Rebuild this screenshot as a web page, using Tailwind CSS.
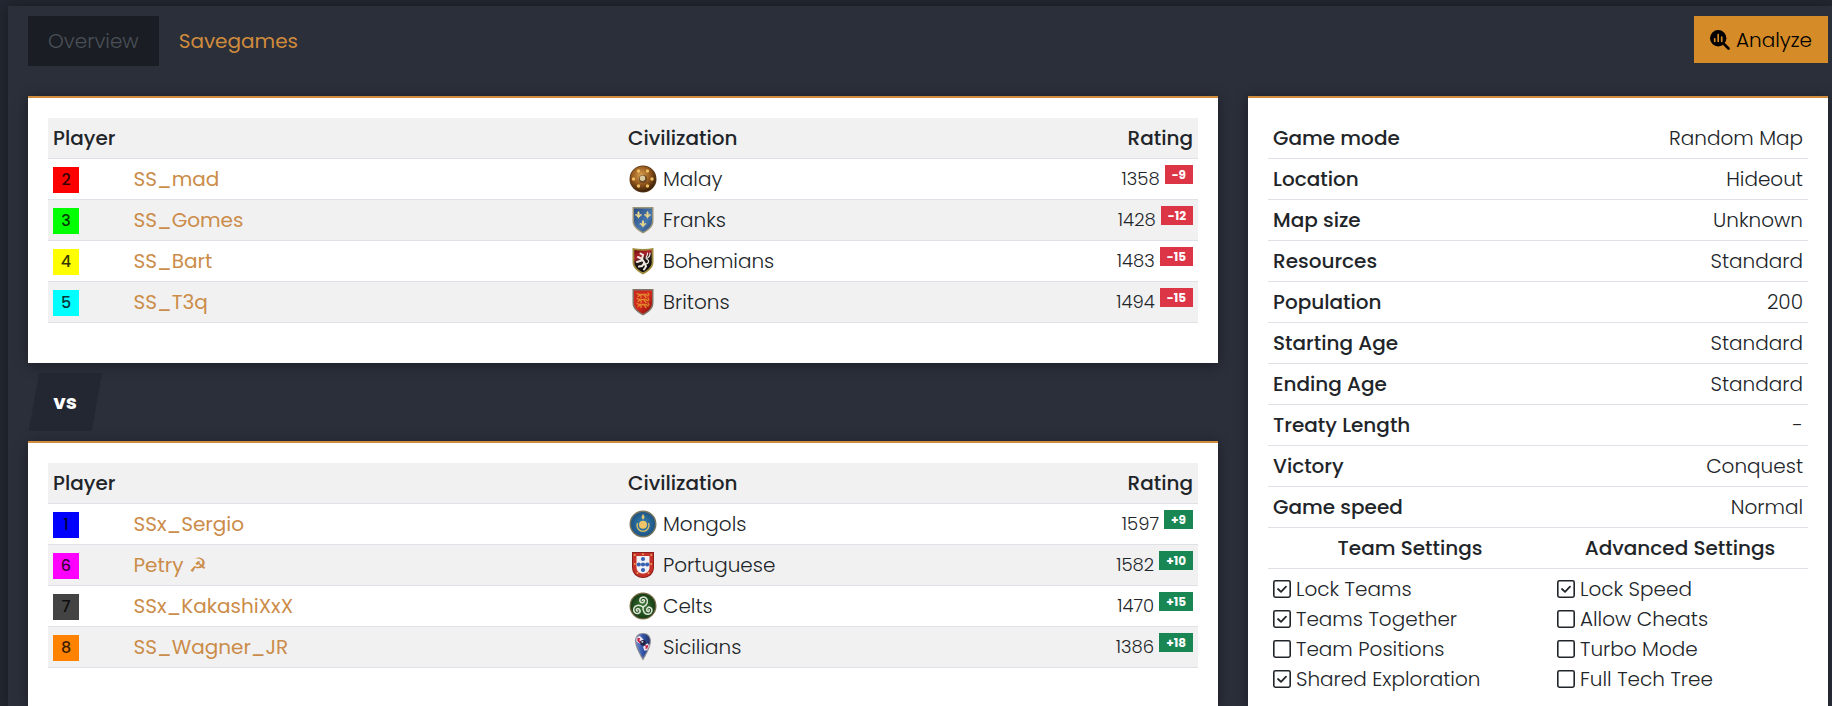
<!DOCTYPE html>
<html lang="en">
<head>
<meta charset="utf-8">
<meta name="viewport" content="width=device-width, initial-scale=1">
<title>Match overview</title>
<script src="https://cdn.jsdelivr.net/npm/@tailwindcss/browser@4"></script>
</head>
<body class="overflow-x-hidden bg-[#232731] pt-[6px] pl-2 font-[Poppins,Inter,sans-serif] text-[20px] leading-[30px] font-light text-[#212529]">
<svg class="absolute size-0" aria-hidden="true">
  <defs>
    <radialGradient id="gold" cx=".42" cy=".35" r=".65"><stop offset="0" stop-color="#d9a050"/><stop offset=".55" stop-color="#94581c"/><stop offset="1" stop-color="#3c2008"/></radialGradient>
    <linearGradient id="blue" x2="1" y2="1"><stop offset="0" stop-color="#2b4c83"/><stop offset=".6" stop-color="#4676ae"/><stop offset="1" stop-color="#294a7c"/></linearGradient>
    <linearGradient id="red" x2="1" y2="1"><stop offset="0" stop-color="#c82a22"/><stop offset=".5" stop-color="#d3271c"/><stop offset="1" stop-color="#820f0c"/></linearGradient>
    <linearGradient id="boh" x2=".4" y2="1"><stop offset="0" stop-color="#6c1010"/><stop offset=".35" stop-color="#b4222c"/><stop offset=".55" stop-color="#241a1a"/><stop offset="1" stop-color="#0b0b0b"/></linearGradient>
    <radialGradient id="mong"><stop offset="0" stop-color="#3584b4"/><stop offset="1" stop-color="#1d5585"/></radialGradient>
    <radialGradient id="green"><stop offset="0" stop-color="#3d7a35"/><stop offset="1" stop-color="#173d15"/></radialGradient>
    <linearGradient id="sic" x2="1"><stop offset="0" stop-color="#6d8ad0"/><stop offset=".5" stop-color="#3154a8"/><stop offset="1" stop-color="#1f2f63"/></linearGradient>
    <path id="lis" d="M0-4C1.500-2.500 1.200-1 .8.200C2-1.800 3.800-1.200 3.300.800C2.800.200 1.800.600 1.200 1.300H1.800V2H.8L0 4L-.8 2H-1.800V1.300H-1.200C-1.800.600-2.800.200-3.300.800C-3.800-1.200-2-1.800-.8.200C-1.200-1-1.500-2.500 0-4Z"/>
  </defs>
  <symbol id="malay" viewBox="0 0 28 28">
    <circle cx="14" cy="14" r="13.500" fill="#5a3a1a"/><circle cx="14" cy="14" r="12.800" fill="url(#gold)"/>
    <g fill="#f0bd62"><circle cx="9.500" cy="6" r="1.700"/><circle cx="18.500" cy="6" r="1.700"/><circle cx="4.500" cy="14" r="1.700"/><circle cx="23" cy="14" r="1.700"/><circle cx="9.500" cy="21" r="1.700"/><circle cx="18.500" cy="21" r="1.700"/></g>
    <circle cx="14" cy="14" r="4" fill="#6b4a25"/><circle cx="13.500" cy="13.300" r="2.700" fill="#dccba0"/>
  </symbol>
  <symbol id="franks" viewBox="0 0 28 28">
    <path d="M3.500 1H24.500V15C24.500 21 19 25 14 27.500C9 25 3.500 21 3.500 15Z" fill="#9c9478"/><path d="M5 2.500H23V15C23 20 18.500 23.500 14 25.800C9.500 23.500 5 20 5 15Z" fill="url(#blue)"/>
    <g fill="#e7d58c"><use href="#lis" x="9.500" y="9"/><use href="#lis" x="18.500" y="9"/><use href="#lis" x="14" y="18"/></g>
  </symbol>
  <symbol id="bohemians" viewBox="0 0 28 28">
    <path d="M3.500 1Q14 3 24.500 1V15C24.500 21 19 25 14 27.500C9 25 3.500 21 3.500 15Z" fill="#a08c3e"/><path d="M5.300 3Q14 4.600 22.700 3V15C22.700 20 18.500 23 14 25.300C9.500 23 5.300 20 5.300 15Z" fill="url(#boh)"/>
    <g fill="none" stroke="#efe9e2" stroke-linecap="round"><path d="M11.500 6.500L14 8L13 12L15.500 16L13 19L10 19.500M13 12L9 10M12.500 13.500L8 15M15.500 16L17 19.500L15 22.500" stroke-width="2"/><path d="M16 17C21 17 20 12 17.500 12C16 10 19 9 18.500 6M18.500 11C21 10 21 7.500 21 6" stroke-width="1.200"/></g>
  </symbol>
  <symbol id="britons" viewBox="0 0 28 28">
    <path d="M3.500 1H24.500V15C24.500 21 19 25 14 27.500C9 25 3.500 21 3.500 15Z" fill="#817568"/><path d="M5 2.500H23V15C23 20 18.500 23.500 14 25.800C9.500 23.500 5 20 5 15Z" fill="url(#red)"/>
    <g id="lion" fill="none" stroke="#e2882c" stroke-width="1.300" stroke-linecap="round"><path d="M8 5.500L10 6.500H17L19 8M9 8.500L11 7M15 7L17 9.500M19 5L20 7M12 7V9.500"/></g><use href="#lion" y="5"/><use href="#lion" y="10"/>
  </symbol>
  <symbol id="mongols" viewBox="0 0 28 28">
    <circle cx="14" cy="14" r="13.500" fill="#77745f"/><circle cx="14" cy="14" r="12" fill="url(#mong)"/>
    <circle cx="14" cy="14.800" r="4" fill="#f0c469"/><path d="M8.500 13A6 6 0 1 0 19.500 13" fill="none" stroke="#d9bc68" stroke-width="1.400"/><path d="M14 4C16.500 7 15.500 8.500 14 9.500C12.500 8.500 12 7 14 4Z" fill="#dfc170"/>
  </symbol>
  <symbol id="portuguese" viewBox="0 0 28 28">
    <path d="M3 1H25V16C25 23 20 27 14 27C8 27 3 23 3 16Z" fill="#8c201c"/><path d="M4 2H24V16C24 22 19.500 26 14 26C8.500 26 4 22 4 16Z" fill="#c72f29"/>
    <path d="M7.500 5H20.500V16C20.500 20 18 22.500 14 22.500C10 22.500 7.500 20 7.500 16Z" fill="#f2f2f4"/>
    <g fill="#3762b3"><circle cx="14" cy="8" r="2.100"/><circle cx="14" cy="13.500" r="2.100"/><circle cx="9.800" cy="13.500" r="2.100"/><circle cx="18.200" cy="13.500" r="2.100"/><circle cx="14" cy="19" r="2.100"/></g>
    <g fill="#e3a75c"><circle cx="5.700" cy="4" r="1"/><circle cx="14" cy="3.300" r="1"/><circle cx="22.300" cy="4" r="1"/><circle cx="5.800" cy="13" r="1"/><circle cx="22.200" cy="13" r="1"/><circle cx="8.500" cy="22" r="1"/><circle cx="19.500" cy="22" r="1"/></g>
  </symbol>
  <symbol id="celts" viewBox="0 0 28 28">
    <circle cx="14" cy="14" r="13.500" fill="#776b45"/><circle cx="14" cy="14" r="12.200" fill="url(#green)"/>
    <g id="arm" fill="none" stroke="#dfe8d8" stroke-width="1.500" stroke-linecap="round"><path d="M14 15C18.500 13 19.500 9 17.500 6.500C15.500 4 10.800 5 10.800 8.300C10.800 11.500 15.500 11.500 15.500 8.700C15.500 7.500 13.500 7.200 13.300 8.500"/></g><use href="#arm" transform="rotate(120 14 15)"/><use href="#arm" transform="rotate(240 14 15)"/>
  </symbol>
  <symbol id="sicilians" viewBox="0 0 28 30">
    <path d="M14 0C19 0 22.800 3.500 22.500 9C22 16 17 24 14 29.500C11 24 6 16 5.500 9C5.200 3.500 9 0 14 0Z" fill="#858795"/><path d="M14 1.200C18.500 1.200 21.500 4.500 21.200 9C20.800 15 17 21 14 26.500C11 21 7.200 15 6.800 9C6.500 4.500 9.500 1.200 14 1.200Z" fill="url(#sic)"/>
    <path d="M7 5L10.500 3L14.500 7L11 11.500L7 9.500ZM14 15L18.500 11L21 13L18.500 18.500L15.500 19Z" fill="#eee5ec"/><path d="M8 5L11 5.500L10 8L13 9L10.500 11L8 8.500ZM15.500 13L18 13.500L20 12.500L18.500 17L16.500 17L17 15Z" fill="#c42148"/><circle cx="14" cy="10.500" r="3" fill="#26213c"/><circle cx="13.300" cy="9.500" r="1.100" fill="#bdc7e4"/>
  </symbol>
  <symbol id="box" viewBox="0 0 18 18"><rect x=".8" y=".8" width="16.400" height="16.400" rx="1.600" fill="none" stroke="currentColor" stroke-width="1.600"/></symbol>
  <symbol id="tick" viewBox="0 0 18 18"><path d="M5 9L8 11.800L13 6.700" fill="none" stroke="currentColor" stroke-width="1.800" stroke-linecap="round" stroke-linejoin="round"/></symbol>
</svg>

<div class="flex min-h-[calc(100vh-6px)] flex-col bg-[#2b2f3a] pr-1 pl-5 shadow-[0_0_12px_rgba(0,0,0,0.3)]">
  <header class="flex items-start justify-between pt-[10px] pb-[30px]">
    <nav class="flex">
      <a href="#overview" aria-current="page" class="bg-[#1a1d23] px-5 py-[10px] text-[#495057]">Overview</a>
      <a href="#savegames" class="px-5 py-[10px] font-normal text-[#d08b3c]">Savegames</a>
    </nav>
    <button type="button" class="flex h-[47px] items-center gap-[6px] bg-[#d58b27] px-4 text-black">
      <svg class="size-5" viewBox="0 0 20 20" aria-hidden="true"><circle cx="8.200" cy="8.200" r="8.200"/><path d="M12 12L18.500 18.500" stroke="black" stroke-width="2.600" stroke-linecap="round"/><path d="M4.700 8.800V11.300M8.200 4.500V11.300M11.700 7.200V11.300" stroke="#d58b27" stroke-width="1.700" stroke-linecap="round"/></svg>
      Analyze
    </button>
  </header>

  <main class="grid flex-1 grid-cols-[119fr_58fr] gap-x-[30px]">
    <div class="flex flex-col">
      <section class="border-t-2 border-[#d08b3c] bg-white px-5 pt-5 pb-10 shadow-[0_2px_12px_rgba(0,0,0,0.4)]">
        <table class="w-full table-fixed border-separate border-spacing-0 [&_td]:h-[41px] [&_td]:border-b [&_td]:border-[#dee2e6] [&_td]:px-[5px] [&_td]:py-0 [&_th]:h-[41px] [&_th]:border-b [&_th]:border-[#dee2e6] [&_th]:px-[5px] [&_th]:py-0 [&_th]:font-medium">
          <colgroup><col class="w-[7%]"><col class="w-[43%]"><col class="w-[25%]"><col class="w-[25%]"></colgroup>
          <thead><tr class="bg-[#f1f1f1]"><th colspan="2" class="text-left">Player</th><th class="text-left">Civilization</th><th class="text-right">Rating</th></tr></thead>
          <tbody>
            <tr><td><span class="mt-[2px] flex size-[26px] items-center justify-center bg-[#ff0000] text-[16px] font-medium text-black/80">2</span></td><td><a href="#p2" class="font-normal text-[#cb8c49]">SS_mad</a></td><td><span class="flex items-center gap-[6px] pl-px"><svg class="size-7" aria-hidden="true"><use href="#malay"/></svg>Malay</span></td><td><span class="flex items-center justify-end gap-[5px] text-[18px]">1358<span class="mb-[9px] bg-[#dc3545] px-[7px] text-[12px] leading-[19px] font-bold text-white">-9</span></span></td></tr>
            <tr class="bg-[#f1f1f1]"><td><span class="mt-[2px] flex size-[26px] items-center justify-center bg-[#00ff00] text-[16px] font-medium text-black/80">3</span></td><td><a href="#p3" class="font-normal text-[#cb8c49]">SS_Gomes</a></td><td><span class="flex items-center gap-[6px] pl-px"><svg class="size-7" aria-hidden="true"><use href="#franks"/></svg>Franks</span></td><td><span class="flex items-center justify-end gap-[5px] text-[18px]">1428<span class="mb-[9px] bg-[#dc3545] px-[7px] text-[12px] leading-[19px] font-bold text-white">-12</span></span></td></tr>
            <tr><td><span class="mt-[2px] flex size-[26px] items-center justify-center bg-[#ffff00] text-[16px] font-medium text-black/80">4</span></td><td><a href="#p4" class="font-normal text-[#cb8c49]">SS_Bart</a></td><td><span class="flex items-center gap-[6px] pl-px"><svg class="size-7" aria-hidden="true"><use href="#bohemians"/></svg>Bohemians</span></td><td><span class="flex items-center justify-end gap-[5px] text-[18px]">1483<span class="mb-[9px] bg-[#dc3545] px-[7px] text-[12px] leading-[19px] font-bold text-white">-15</span></span></td></tr>
            <tr class="bg-[#f1f1f1]"><td><span class="mt-[2px] flex size-[26px] items-center justify-center bg-[#00ffff] text-[16px] font-medium text-black/80">5</span></td><td><a href="#p5" class="font-normal text-[#cb8c49]">SS_T3q</a></td><td><span class="flex items-center gap-[6px] pl-px"><svg class="size-7" aria-hidden="true"><use href="#britons"/></svg>Britons</span></td><td><span class="flex items-center justify-end gap-[5px] text-[18px]">1494<span class="mb-[9px] bg-[#dc3545] px-[7px] text-[12px] leading-[19px] font-bold text-white">-15</span></span></td></tr>
          </tbody>
        </table>
      </section>

      <div class="my-[10px] flex h-[58px] w-[74px] items-center justify-center bg-[#232731] text-[20px] font-bold text-white [clip-path:polygon(15%_0,100%_0,86%_100%,1%_100%)]">vs</div>

      <section class="flex-1 border-t-2 border-[#d08b3c] bg-white px-5 pt-5 pb-8 shadow-[0_2px_12px_rgba(0,0,0,0.4)]">
        <table class="w-full table-fixed border-separate border-spacing-0 [&_td]:h-[41px] [&_td]:border-b [&_td]:border-[#dee2e6] [&_td]:px-[5px] [&_td]:py-0 [&_th]:h-[41px] [&_th]:border-b [&_th]:border-[#dee2e6] [&_th]:px-[5px] [&_th]:py-0 [&_th]:font-medium">
          <colgroup><col class="w-[7%]"><col class="w-[43%]"><col class="w-[25%]"><col class="w-[25%]"></colgroup>
          <thead><tr class="bg-[#f1f1f1]"><th colspan="2" class="text-left">Player</th><th class="text-left">Civilization</th><th class="text-right">Rating</th></tr></thead>
          <tbody>
            <tr><td><span class="mt-[2px] flex size-[26px] items-center justify-center bg-[#0000ff] text-[16px] font-medium text-black/80">1</span></td><td><a href="#p1" class="font-normal text-[#cb8c49]">SSx_Sergio</a></td><td><span class="flex items-center gap-[6px] pl-px"><svg class="size-7" aria-hidden="true"><use href="#mongols"/></svg>Mongols</span></td><td><span class="flex items-center justify-end gap-[5px] text-[18px]">1597<span class="mb-[9px] bg-[#198754] px-[7px] text-[12px] leading-[19px] font-bold text-white">+9</span></span></td></tr>
            <tr class="bg-[#f1f1f1]"><td><span class="mt-[2px] flex size-[26px] items-center justify-center bg-[#ff00ff] text-[16px] font-medium text-black/80">6</span></td><td><a href="#p6" class="font-normal text-[#cb8c49]">Petry ☭</a></td><td><span class="flex items-center gap-[6px] pl-px"><svg class="size-7" aria-hidden="true"><use href="#portuguese"/></svg>Portuguese</span></td><td><span class="flex items-center justify-end gap-[5px] text-[18px]">1582<span class="mb-[9px] bg-[#198754] px-[7px] text-[12px] leading-[19px] font-bold text-white">+10</span></span></td></tr>
            <tr><td><span class="mt-[2px] flex size-[26px] items-center justify-center bg-[#434343] text-[16px] font-medium text-black/80">7</span></td><td><a href="#p7" class="font-normal text-[#cb8c49]">SSx_KakashiXxX</a></td><td><span class="flex items-center gap-[6px] pl-px"><svg class="size-7" aria-hidden="true"><use href="#celts"/></svg>Celts</span></td><td><span class="flex items-center justify-end gap-[5px] text-[18px]">1470<span class="mb-[9px] bg-[#198754] px-[7px] text-[12px] leading-[19px] font-bold text-white">+15</span></span></td></tr>
            <tr class="bg-[#f1f1f1]"><td><span class="mt-[2px] flex size-[26px] items-center justify-center bg-[#ff8201] text-[16px] font-medium text-black/80">8</span></td><td><a href="#p8" class="font-normal text-[#cb8c49]">SS_Wagner_JR</a></td><td><span class="flex items-center gap-[6px] pl-px"><svg class="size-7" aria-hidden="true"><use href="#sicilians"/></svg>Sicilians</span></td><td><span class="flex items-center justify-end gap-[5px] text-[18px]">1386<span class="mb-[9px] bg-[#198754] px-[7px] text-[12px] leading-[19px] font-bold text-white">+18</span></span></td></tr>
          </tbody>
        </table>
      </section>
    </div>

    <aside class="border-t-2 border-[#d08b3c] bg-white px-5 pt-5 shadow-[0_2px_12px_rgba(0,0,0,0.4)]">
      <table class="w-full border-separate border-spacing-0 [&_td]:h-[41px] [&_td]:border-b [&_td]:border-[#dee2e6] [&_td]:px-[5px] [&_td]:py-0 [&_td]:text-right [&_th]:border-b [&_th]:border-[#dee2e6] [&_th]:px-[5px] [&_th]:py-0 [&_th]:text-left [&_th]:font-medium">
        <tbody>
          <tr><th scope="row">Game mode</th><td>Random Map</td></tr>
          <tr><th scope="row">Location</th><td>Hideout</td></tr>
          <tr><th scope="row">Map size</th><td>Unknown</td></tr>
          <tr><th scope="row">Resources</th><td>Standard</td></tr>
          <tr><th scope="row">Population</th><td>200</td></tr>
          <tr><th scope="row">Starting Age</th><td>Standard</td></tr>
          <tr><th scope="row">Ending Age</th><td>Standard</td></tr>
          <tr><th scope="row">Treaty Length</th><td>-</td></tr>
          <tr><th scope="row">Victory</th><td>Conquest</td></tr>
          <tr><th scope="row">Game speed</th><td>Normal</td></tr>
        </tbody>
      </table>
      <div class="grid grid-cols-[71fr_64fr]">
        <h2 class="flex h-[41px] items-center justify-center border-b border-[#dee2e6] font-medium">Team Settings</h2>
        <h2 class="flex h-[41px] items-center justify-center border-b border-[#dee2e6] font-medium">Advanced Settings</h2>
        <div class="px-[5px] py-[5px]">
          <label class="flex items-center gap-[5px]"><span class="grid size-[18px] *:col-start-1 *:row-start-1 *:size-[18px]"><input type="checkbox" checked class="peer appearance-none"><svg class="pointer-events-none"><use href="#box"/></svg><svg class="pointer-events-none invisible peer-checked:visible"><use href="#tick"/></svg></span>Lock Teams</label>
          <label class="flex items-center gap-[5px]"><span class="grid size-[18px] *:col-start-1 *:row-start-1 *:size-[18px]"><input type="checkbox" checked class="peer appearance-none"><svg class="pointer-events-none"><use href="#box"/></svg><svg class="pointer-events-none invisible peer-checked:visible"><use href="#tick"/></svg></span>Teams Together</label>
          <label class="flex items-center gap-[5px]"><span class="grid size-[18px] *:col-start-1 *:row-start-1 *:size-[18px]"><input type="checkbox" class="peer appearance-none"><svg class="pointer-events-none"><use href="#box"/></svg><svg class="pointer-events-none invisible peer-checked:visible"><use href="#tick"/></svg></span>Team Positions</label>
          <label class="flex items-center gap-[5px]"><span class="grid size-[18px] *:col-start-1 *:row-start-1 *:size-[18px]"><input type="checkbox" checked class="peer appearance-none"><svg class="pointer-events-none"><use href="#box"/></svg><svg class="pointer-events-none invisible peer-checked:visible"><use href="#tick"/></svg></span>Shared Exploration</label>
        </div>
        <div class="px-[5px] py-[5px]">
          <label class="flex items-center gap-[5px]"><span class="grid size-[18px] *:col-start-1 *:row-start-1 *:size-[18px]"><input type="checkbox" checked class="peer appearance-none"><svg class="pointer-events-none"><use href="#box"/></svg><svg class="pointer-events-none invisible peer-checked:visible"><use href="#tick"/></svg></span>Lock Speed</label>
          <label class="flex items-center gap-[5px]"><span class="grid size-[18px] *:col-start-1 *:row-start-1 *:size-[18px]"><input type="checkbox" class="peer appearance-none"><svg class="pointer-events-none"><use href="#box"/></svg><svg class="pointer-events-none invisible peer-checked:visible"><use href="#tick"/></svg></span>Allow Cheats</label>
          <label class="flex items-center gap-[5px]"><span class="grid size-[18px] *:col-start-1 *:row-start-1 *:size-[18px]"><input type="checkbox" class="peer appearance-none"><svg class="pointer-events-none"><use href="#box"/></svg><svg class="pointer-events-none invisible peer-checked:visible"><use href="#tick"/></svg></span>Turbo Mode</label>
          <label class="flex items-center gap-[5px]"><span class="grid size-[18px] *:col-start-1 *:row-start-1 *:size-[18px]"><input type="checkbox" class="peer appearance-none"><svg class="pointer-events-none"><use href="#box"/></svg><svg class="pointer-events-none invisible peer-checked:visible"><use href="#tick"/></svg></span>Full Tech Tree</label>
        </div>
      </div>
    </aside>
  </main>
</div>
</body>
</html>
